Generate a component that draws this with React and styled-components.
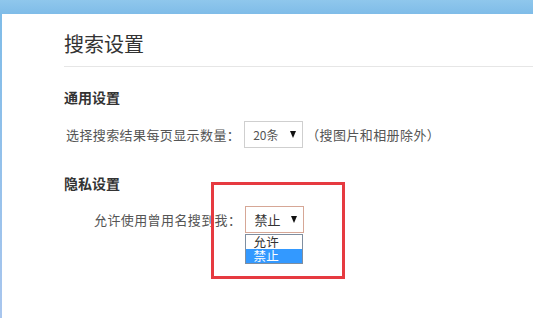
import styled, { createGlobalStyle } from "styled-components";

const GlobalStyle = createGlobalStyle`
  html, body {
    margin: 0;
    padding: 0;
  }
  body {
    font-family: "Noto Sans CJK SC", "Liberation Sans", sans-serif;
  }
`;

const Page = styled.div`
  height: 318px;
  padding: 14px 0 0 2px;
  box-sizing: border-box;
  background: linear-gradient(180deg, #8fc7ec 0px, #7fbce8 14px, #a9c6ee 318px);
  overflow: hidden;
`;

const Panel = styled.div`
  height: 100%;
  background: #fff;
  padding: 16px 0 0 62px;
  box-sizing: border-box;
`;

const Heading = styled.h1`
  margin: 0;
  padding-bottom: 8px;
  border-bottom: 1px solid #e6e6e6;
  font-size: 20px;
  font-weight: normal;
  line-height: 28px;
  color: #333;
`;

const SectionTitle = styled.h2`
  margin: ${({ $top }) => $top}px 0 0;
  font-size: 14px;
  font-weight: bold;
  line-height: 20px;
  color: #333;
`;

const Row = styled.div`
  display: flex;
  align-items: center;
  margin-top: ${({ $top }) => $top}px;
  padding-left: ${({ $indent }) => $indent}px;
  height: 27px;
  font-size: 13px;
  letter-spacing: 0.4px;
  color: #555;
`;

const Label = styled.span`
  margin-right: 4px;
`;

const Note = styled.span`
  margin-left: 3px;
`;

const SelectWrap = styled.div`
  position: relative;
  width: 59px;
  height: 27px;
`;

const SelectBox = styled.div`
  display: flex;
  align-items: center;
  justify-content: space-between;
  width: 100%;
  height: 100%;
  box-sizing: border-box;
  padding: 0 6px 0 8px;
  border: 1px solid ${({ $focus }) => ($focus ? "#d6a796" : "#cfcfcf")};
  background: #fff;
  font-size: ${({ $focus }) => ($focus ? "13px" : "12px")};
  letter-spacing: 0;
  color: ${({ $focus }) => ($focus ? "#333" : "#555")};
`;

const Arrow = styled.span`
  width: 0;
  height: 0;
  border-left: 3.5px solid transparent;
  border-right: 3.5px solid transparent;
  border-top: 7px solid #111;
`;

const OptionList = styled.ul`
  position: absolute;
  top: 28px;
  left: 0;
  width: 58px;
  margin: 0;
  padding: 0;
  list-style: none;
  box-sizing: border-box;
  border: 1px solid #7f8ea0;
  background: #fff;
  z-index: 2;
`;

const Option = styled.li`
  height: 14px;
  line-height: 14px;
  padding-left: 7px;
  font-size: 12.5px;
  letter-spacing: 0.3px;
  color: ${({ $selected }) => ($selected ? "#fff" : "#333")};
  background: ${({ $selected }) => ($selected ? "#3399ff" : "#fff")};
`;

const Highlight = styled.div`
  position: absolute;
  left: -34px;
  top: -24px;
  width: 134px;
  height: 97px;
  box-sizing: border-box;
  border: 3px solid #e63a40;
  pointer-events: none;
  z-index: 3;
`;

export default function App() {
  return (
    <>
      <GlobalStyle />
      <Page>
        <Panel>
          <Heading>搜索设置</Heading>

          <SectionTitle $top={20}>通用设置</SectionTitle>
          <Row $top={14} $indent={2}>
            <Label>选择搜索结果每页显示数量：</Label>
            <SelectWrap>
              <SelectBox>
                <span>20条</span>
                <Arrow />
              </SelectBox>
            </SelectWrap>
            <Note>（搜图片和相册除外）</Note>
          </Row>

          <SectionTitle $top={25}>隐私设置</SectionTitle>
          <Row $top={13} $indent={30}>
            <Label>允许使用曾用名搜到我：</Label>
            <SelectWrap>
              <SelectBox $focus>
                <span>禁止</span>
                <Arrow />
              </SelectBox>
              <OptionList>
                <Option>允许</Option>
                <Option $selected>禁止</Option>
              </OptionList>
              <Highlight />
            </SelectWrap>
          </Row>
        </Panel>
      </Page>
    </>
  );
}
